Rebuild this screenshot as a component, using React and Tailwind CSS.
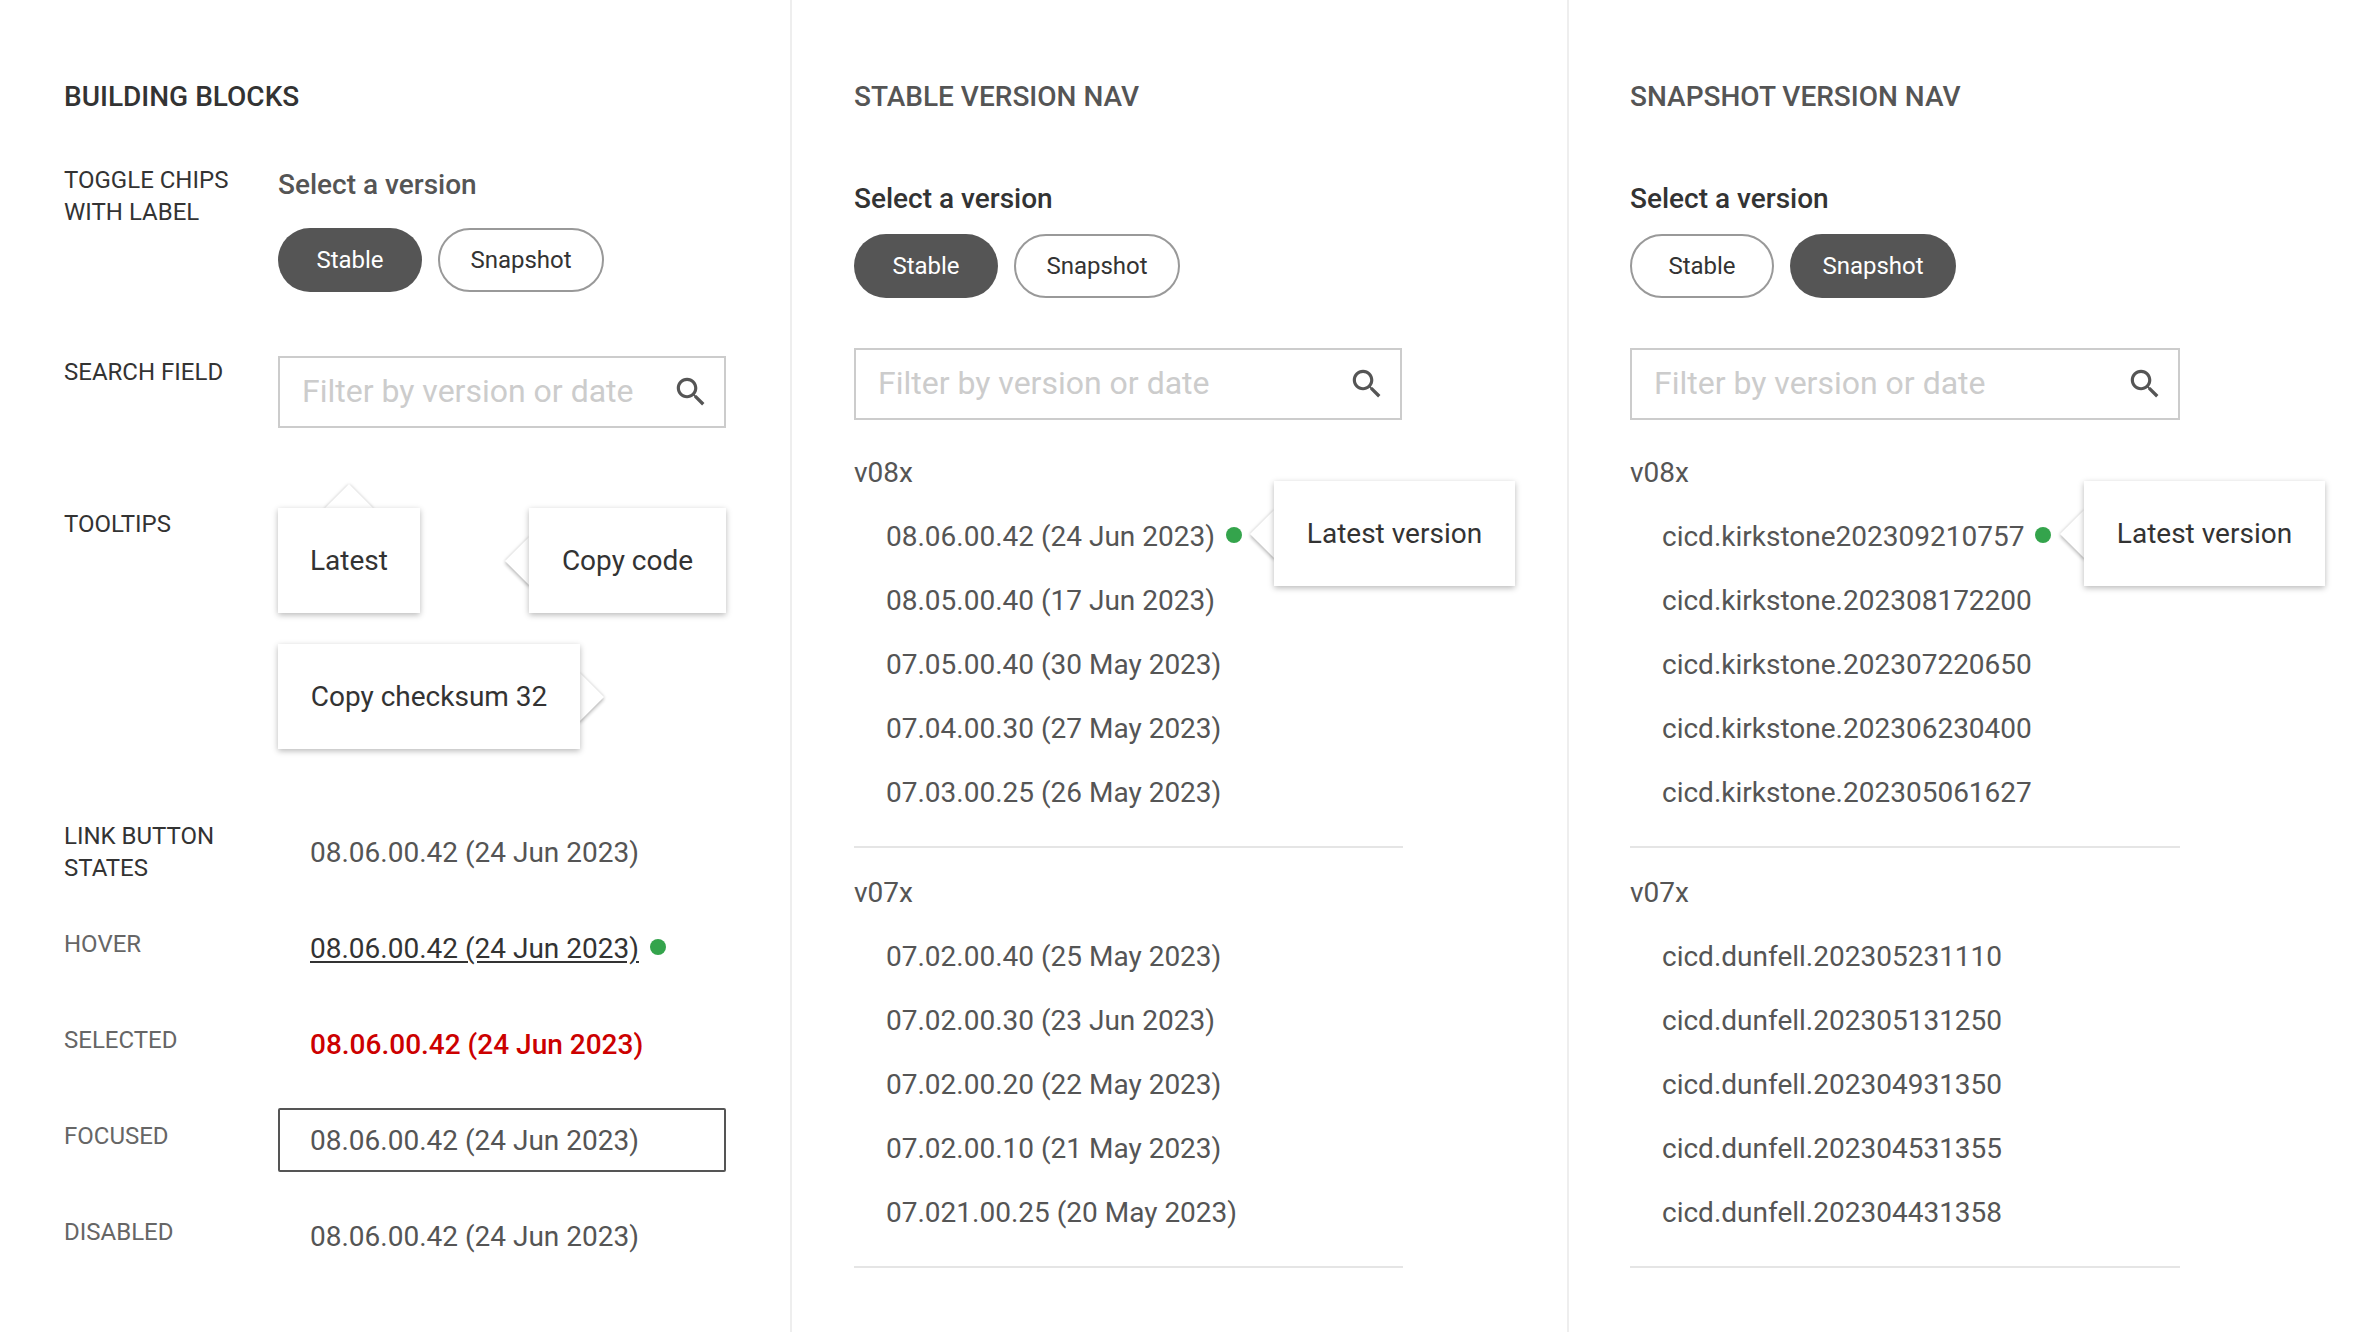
import { Fragment } from "react";

const stableGroups = [
  {
    name: "v08x",
    items: [
      "08.06.00.42 (24 Jun 2023)",
      "08.05.00.40 (17 Jun 2023)",
      "07.05.00.40 (30 May 2023)",
      "07.04.00.30 (27 May 2023)",
      "07.03.00.25 (26 May 2023)",
    ],
  },
  {
    name: "v07x",
    items: [
      "07.02.00.40 (25 May 2023)",
      "07.02.00.30 (23 Jun 2023)",
      "07.02.00.20 (22 May 2023)",
      "07.02.00.10 (21 May 2023)",
      "07.021.00.25 (20 May 2023)",
    ],
  },
];

const snapshotGroups = [
  {
    name: "v08x",
    items: [
      "cicd.kirkstone202309210757",
      "cicd.kirkstone.202308172200",
      "cicd.kirkstone.202307220650",
      "cicd.kirkstone.202306230400",
      "cicd.kirkstone.202305061627",
    ],
  },
  {
    name: "v07x",
    items: [
      "cicd.dunfell.202305231110",
      "cicd.dunfell.202305131250",
      "cicd.dunfell.202304931350",
      "cicd.dunfell.202304531355",
      "cicd.dunfell.202304431358",
    ],
  },
];

function Dot({ className = "" }) {
  return <span className={`inline-block shrink-0 w-[16px] h-[16px] rounded-full bg-[#34a44c] ${className}`} />;
}

function Chip({ label, active, width }) {
  return (
    <button
      className={`h-[64px] rounded-full text-[24px] ${width} ${
        active ? "bg-[#555555] text-white" : "bg-white text-[#333333] border-2 border-[#999999]"
      }`}
    >
      {label}
    </button>
  );
}

function Chips({ active }) {
  return (
    <div className="flex gap-[16px]">
      <Chip label="Stable" active={active === "stable"} width="w-[144px]" />
      <Chip label="Snapshot" active={active === "snapshot"} width="w-[166px]" />
    </div>
  );
}

function SearchField({ width }) {
  return (
    <div className={`h-[72px] flex items-center border-2 border-[#cccccc] pl-[22px] pr-[14px] ${width}`}>
      <input
        placeholder="Filter by version or date"
        className="flex-1 min-w-0 pb-[2px] bg-transparent text-[32px] outline-none placeholder:text-[#cccccc]"
      />
      <svg viewBox="0 0 24 24" className="w-[38px] h-[38px] fill-[#555555]">
        <path d="M15.5 14h-.79l-.28-.27C15.41 12.59 16 11.11 16 9.5 16 5.91 13.09 3 9.5 3S3 5.91 3 9.5 5.91 16 9.5 16c1.61 0 3.09-.59 4.23-1.57l.27.28v.79l5 4.99L20.49 19l-4.99-5zm-6 0C7.01 14 5 11.99 5 9.5S7.01 5 9.5 5 14 7.01 14 9.5 11.99 14 9.5 14z" />
      </svg>
    </div>
  );
}

function Tooltip({ text, arrow, className = "" }) {
  const arrowPos = {
    top: "left-1/2 -top-[17px] -ml-[17px]",
    left: "-left-[17px] top-1/2 -mt-[17px]",
    right: "-right-[17px] top-1/2 -mt-[17px]",
  }[arrow];
  return (
    <div className={`h-[105px] ${className}`}>
      <div className="relative h-full">
        <div className={`absolute w-[34px] h-[34px] rotate-45 bg-white shadow-[0_0_4px_rgba(0,0,0,0.14),1.4px_1.4px_4px_rgba(0,0,0,0.24)] ${arrowPos}`} />
        <div className="relative h-full flex items-center justify-center bg-white text-[28px] text-[#333333] shadow-[0_2px_6px_rgba(0,0,0,0.28)]">
          {text}
        </div>
      </div>
    </div>
  );
}

function Label({ children, muted, className = "" }) {
  return (
    <div className={`w-[214px] shrink-0 text-[24px] leading-[32px] uppercase ${muted ? "text-[#666666]" : "text-[#333333]"} ${className}`}>
      {children}
    </div>
  );
}

function Heading({ children, dark }) {
  return <h2 className={`text-[28px] leading-[32px] font-medium uppercase ${dark ? "text-[#333333]" : "text-[#555555]"}`}>{children}</h2>;
}

function BuildingBlocks() {
  const version = "08.06.00.42 (24 Jun 2023)";
  return (
    <section className="w-[792px] shrink-0 border-r-2 border-[#eeeeee] pt-[81px] pl-[64px]">
      <Heading dark>Building blocks</Heading>

      <div className="flex mt-[51px]">
        <Label>
          Toggle chips
          <br />
          with label
        </Label>
        <div className="pt-[5px]">
          <div className="text-[28px] leading-[32px] font-medium text-[#555555] mb-[27px]">Select a version</div>
          <Chips active="stable" />
        </div>
      </div>

      <div className="flex mt-[64px]">
        <Label>Search field</Label>
        <SearchField width="w-[448px]" />
      </div>

      <div className="flex mt-[80px]">
        <Label>Tooltips</Label>
        <div className="w-[448px]">
          <div className="flex justify-between">
            <Tooltip text="Latest" arrow="top" className="w-[142px]" />
            <Tooltip text="Copy code" arrow="left" className="w-[197px]" />
          </div>
          <Tooltip text="Copy checksum 32" arrow="right" className="w-[302px] mt-[31px]" />
        </div>
      </div>

      <div className="mt-[72px] flex flex-col gap-[32px]">
        <div className="flex h-[64px]">
          <Label className="-mt-[1px]">
            Link button
            <br />
            states
          </Label>
          <div className="flex items-center pl-[32px] text-[28px] text-[#555555]">{version}</div>
        </div>
        <div className="flex h-[64px]">
          <Label muted className="pt-[11px]">Hover</Label>
          <div className="flex items-center pl-[32px] text-[28px] text-[#333333]">
            <span className="underline underline-offset-[3px]">{version}</span>
            <Dot className="ml-[11px] -translate-y-[2px]" />
          </div>
        </div>
        <div className="flex h-[64px]">
          <Label muted className="pt-[11px]">Selected</Label>
          <div className="flex items-center pl-[32px] text-[28px] font-medium text-[#cc0000]">{version}</div>
        </div>
        <div className="flex h-[64px]">
          <Label muted className="pt-[11px]">Focused</Label>
          <div className="w-[448px] h-[64px] -mt-[1px] pt-[1px] flex items-center pl-[30px] text-[28px] text-[#555555] border-2 border-[#555555] rounded-[2px]">{version}</div>
        </div>
        <div className="flex h-[64px]">
          <Label muted className="pt-[11px]">Disabled</Label>
          <div className="flex items-center pl-[32px] text-[28px] text-[#555555]">{version}</div>
        </div>
      </div>
    </section>
  );
}

function VersionNav({ title, active, groups, tipLeft, searchWidth, listWidth, className }) {
  return (
    <section className={`pt-[81px] ${className}`}>
      <Heading>{title}</Heading>
      <div className="mt-[70px] text-[28px] leading-[32px] font-medium text-[#333333] mb-[19px]">Select a version</div>
      <Chips active={active} />
      <div className="mt-[50px]">
        <SearchField width={searchWidth} />
      </div>
      <div className={`mt-[37px] ${listWidth}`}>
        {groups.map((group, i) => (
          <Fragment key={group.name}>
            <div className={`text-[28px] leading-[32px] text-[#555555] ${i > 0 ? "mt-[29px]" : ""}`}>{group.name}</div>
            <ul className="mt-[16px] flex flex-col">
              {group.items.map((item, j) => (
                <li key={item} className="relative h-[64px] flex items-center pl-[32px] text-[28px] text-[#555555] whitespace-nowrap">
                  {item}
                  {i === 0 && j === 0 && (
                    <>
                      <Dot className="ml-[11px] -translate-y-[2px]" />
                      <div className={`absolute -top-[24px] ${tipLeft}`}>
                        <Tooltip text="Latest version" arrow="left" className="w-[241px]" />
                      </div>
                    </>
                  )}
                </li>
              ))}
            </ul>
            <div className="h-[2px] bg-[#e5e5e5] mt-[21px]" />
          </Fragment>
        ))}
      </div>
    </section>
  );
}

export default function App() {
  return (
    <div className="flex w-[2370px] h-[1332px] overflow-hidden bg-white font-['Roboto',sans-serif]">
      <BuildingBlocks />
      <VersionNav
        title="Stable version nav"
        active="stable"
        groups={stableGroups}
        tipLeft="left-[420px]"
        searchWidth="w-[548px]"
        listWidth="w-[549px]"
        className="w-[777px] shrink-0 border-r-2 border-[#eeeeee] pl-[62px]"
      />
      <VersionNav
        title="Snapshot version nav"
        active="snapshot"
        groups={snapshotGroups}
        tipLeft="left-[454px]"
        searchWidth="w-[550px]"
        listWidth="w-[550px]"
        className="flex-1 pl-[61px]"
      />
    </div>
  );
}
